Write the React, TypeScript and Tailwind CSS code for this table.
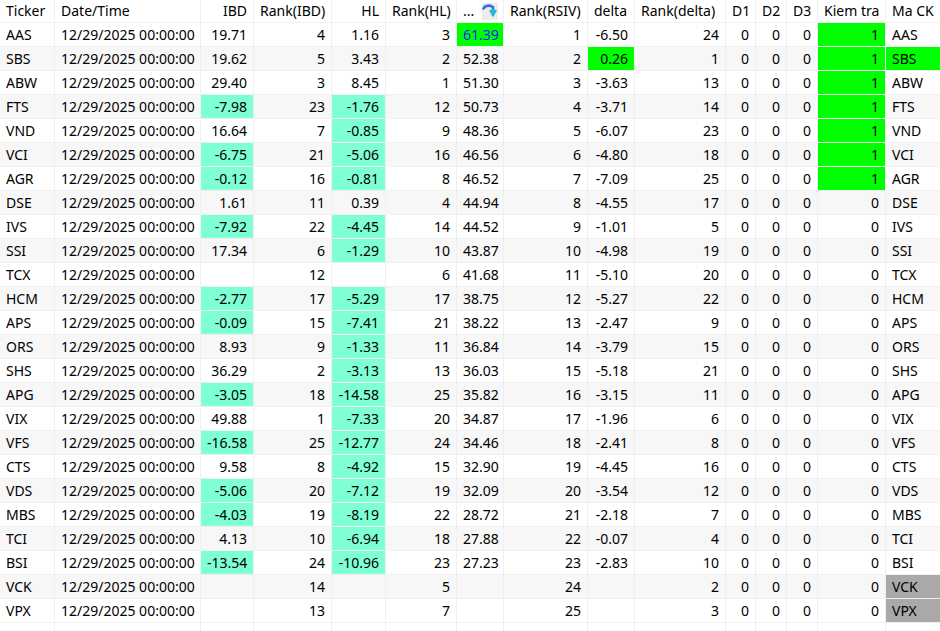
import React from "react";

type Row = {
  t: string;
  ibd: string;
  ribd: string;
  hl: string;
  rhl: string;
  rsiv: string;
  rrsiv: string;
  delta: string;
  rdelta: string;
  kt: string;
};

const raw: string[] = [
  "AAS|19.71|4|1.16|3|61.39|1|-6.50|24|1",
  "SBS|19.62|5|3.43|2|52.38|2|0.26|1|1",
  "ABW|29.40|3|8.45|1|51.30|3|-3.63|13|1",
  "FTS|-7.98|23|-1.76|12|50.73|4|-3.71|14|1",
  "VND|16.64|7|-0.85|9|48.36|5|-6.07|23|1",
  "VCI|-6.75|21|-5.06|16|46.56|6|-4.80|18|1",
  "AGR|-0.12|16|-0.81|8|46.52|7|-7.09|25|1",
  "DSE|1.61|11|0.39|4|44.94|8|-4.55|17|0",
  "IVS|-7.92|22|-4.45|14|44.52|9|-1.01|5|0",
  "SSI|17.34|6|-1.29|10|43.87|10|-4.98|19|0",
  "TCX||12||6|41.68|11|-5.10|20|0",
  "HCM|-2.77|17|-5.29|17|38.75|12|-5.27|22|0",
  "APS|-0.09|15|-7.41|21|38.22|13|-2.47|9|0",
  "ORS|8.93|9|-1.33|11|36.84|14|-3.79|15|0",
  "SHS|36.29|2|-3.13|13|36.03|15|-5.18|21|0",
  "APG|-3.05|18|-14.58|25|35.82|16|-3.15|11|0",
  "VIX|49.88|1|-7.33|20|34.87|17|-1.96|6|0",
  "VFS|-16.58|25|-12.77|24|34.46|18|-2.41|8|0",
  "CTS|9.58|8|-4.92|15|32.90|19|-4.45|16|0",
  "VDS|-5.06|20|-7.12|19|32.09|20|-3.54|12|0",
  "MBS|-4.03|19|-8.19|22|28.72|21|-2.18|7|0",
  "TCI|4.13|10|-6.94|18|27.88|22|-0.07|4|0",
  "BSI|-13.54|24|-10.96|23|27.23|23|-2.83|10|0",
  "VCK||14||5||24||2|0",
  "VPX||13||7||25||3|0",
];

const rows: Row[] = raw.map((s) => {
  const [t, ibd, ribd, hl, rhl, rsiv, rrsiv, delta, rdelta, kt] = s.split("|");
  return { t, ibd, ribd, hl, rhl, rsiv, rrsiv, delta, rdelta, kt };
});

const widths = [55, 146, 53, 78, 54, 71, 47, 84, 47, 91, 30, 31, 31, 68, 60];

function SortIcon() {
  return (
    <svg width="16" height="17" viewBox="0 0 16 17" className="inline-block">
      <rect x="0" y="0" width="16" height="17" fill="#ececec" />
      <path
        d="M1.5 5.5 C3 2.2 8 1.8 11 4.2 L11 7.5"
        fill="none"
        stroke="#2f6fe0"
        strokeWidth="2.6"
        strokeLinecap="round"
      />
      <path d="M1.2 4.2 L3.5 3 L3 6 Z" fill="#2f6fe0" />
      <path d="M7.5 7.5 H14.5 L11 13.5 Z" fill="#19bfe0" stroke="#1591c8" strokeWidth="0.6" />
      <rect x="9.3" y="5.8" width="3.4" height="2.2" fill="#19bfe0" />
    </svg>
  );
}

const cellBase =
  "h-[24px] p-0 px-[6px] border-r border-b border-[#f0f0f0] whitespace-nowrap overflow-hidden leading-[23px]";
const hdrBase =
  "h-[23px] p-0 px-[6px] border-r border-b border-[#f0f0f0] whitespace-nowrap overflow-hidden font-normal leading-[22px]";

export default function App() {
  return (
    <div
      className="w-[940px] h-[631px] overflow-hidden bg-white text-black text-[14px]"
      style={{ fontFamily: '"Noto Sans", "Open Sans", sans-serif' }}
    >
      <table className="table-fixed border-separate border-spacing-0 w-[946px]">
        <colgroup>
          {widths.map((w, i) => (
            <col key={i} style={{ width: w }} />
          ))}
        </colgroup>
        <thead>
          <tr>
            <th className={`${hdrBase} text-left`}>Ticker</th>
            <th className={`${hdrBase} text-left`}>Date/Time</th>
            <th className={`${hdrBase} text-right`}>IBD</th>
            <th className={`${hdrBase} text-left`}>Rank(IBD)</th>
            <th className={`${hdrBase} text-right`}>HL</th>
            <th className={`${hdrBase} text-left`}>Rank(HL)</th>
            <th className={`${hdrBase} text-left`}>
              <div className="flex items-center justify-between">
                <span>...</span>
                <span className="flex items-center -mr-[1px]">
                  <SortIcon />
                </span>
              </div>
            </th>
            <th className={`${hdrBase} text-left`}>Rank(RSIV)</th>
            <th className={`${hdrBase} text-left`}>delta</th>
            <th className={`${hdrBase} text-left`}>Rank(delta)</th>
            <th className={`${hdrBase} text-left`}>D1</th>
            <th className={`${hdrBase} text-left`}>D2</th>
            <th className={`${hdrBase} text-left`}>D3</th>
            <th className={`${hdrBase} text-left`}>Kiem tra</th>
            <th className={`${hdrBase} text-left`}>Ma CK</th>
          </tr>
        </thead>
        <tbody>
          {rows.map((r, i) => {
            const alt = i % 2 === 1;
            const rowBg = alt ? "bg-[#f7f7f7]" : "bg-white";
            const ibdNeg = r.ibd.startsWith("-");
            const hlNeg = r.hl.startsWith("-");
            const rsivGreen = i === 0;
            const deltaGreen = r.delta !== "" && !r.delta.startsWith("-");
            const ktGreen = r.kt === "1";
            const maGreen = i === 1;
            const maGray = r.t === "VCK" || r.t === "VPX";
            return (
              <tr key={r.t}>
                <td className={`${cellBase} ${rowBg} text-left`}>{r.t}</td>
                <td className={`${cellBase} ${rowBg} text-left`}>12/29/2025 00:00:00</td>
                <td className={`${cellBase} ${ibdNeg ? "bg-[#7fffd4]" : rowBg} text-right`}>{r.ibd}</td>
                <td className={`${cellBase} ${rowBg} text-right`}>{r.ribd}</td>
                <td className={`${cellBase} ${hlNeg ? "bg-[#7fffd4]" : rowBg} text-right`}>{r.hl}</td>
                <td className={`${cellBase} ${rowBg} text-right`}>{r.rhl}</td>
                <td
                  className={`${cellBase} ${rsivGreen ? "bg-[#00ff00] text-[#1a1aff]" : rowBg} text-right`}
                >
                  {r.rsiv}
                </td>
                <td className={`${cellBase} ${rowBg} text-right`}>{r.rrsiv}</td>
                <td className={`${cellBase} ${deltaGreen ? "bg-[#00ff00]" : rowBg} text-right`}>{r.delta}</td>
                <td className={`${cellBase} ${rowBg} text-right`}>{r.rdelta}</td>
                <td className={`${cellBase} ${rowBg} text-right`}>0</td>
                <td className={`${cellBase} ${rowBg} text-right`}>0</td>
                <td className={`${cellBase} ${rowBg} text-right`}>0</td>
                <td className={`${cellBase} ${ktGreen ? "bg-[#00ff00]" : rowBg} text-right`}>{r.kt}</td>
                <td
                  className={`${cellBase} ${
                    maGreen ? "bg-[#00ff00]" : maGray ? "bg-[#a9a9a9]" : rowBg
                  } text-left`}
                >
                  {r.t}
                </td>
              </tr>
            );
          })}
          <tr>
            {widths.map((_, i) => (
              <td key={i} className={`${cellBase} bg-white`}></td>
            ))}
          </tr>
        </tbody>
      </table>
    </div>
  );
}
